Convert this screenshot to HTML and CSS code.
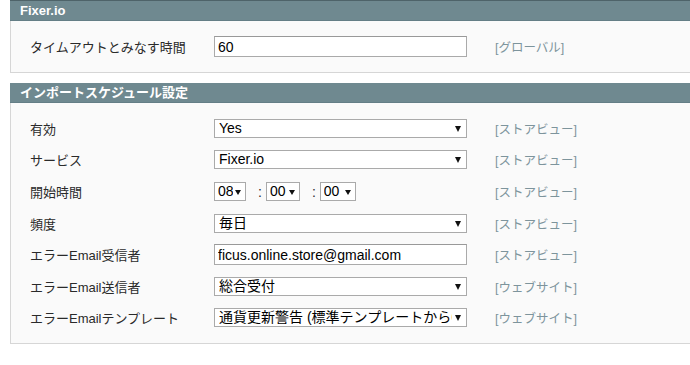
FILE: index.html
```html
<!DOCTYPE html>
<html lang="ja">
<head>
    <meta charset="UTF-8">
    <title>通貨設定</title>
    <link rel="stylesheet" href="styles.css">
</head>
<body>
    <div class="page">
        <div class="top-strip"></div>

        <div class="section">
            <div class="section-head">Fixer.io</div>
            <div class="section-body">
                <div class="row">
                    <label class="label" for="timeout">タイムアウトとみなす時間</label>
                    <div class="value"><input class="text" id="timeout" type="text" value="60"></div>
                    <div class="scope">[グローバル]</div>
                </div>
            </div>
        </div>

        <div class="section">
            <div class="section-head">インポートスケジュール設定</div>
            <div class="section-body">
                <div class="row">
                    <label class="label">有効</label>
                    <div class="value"><span class="select"><select><option>Yes</option></select></span></div>
                    <div class="scope">[ストアビュー]</div>
                </div>
                <div class="row">
                    <label class="label">サービス</label>
                    <div class="value"><span class="select"><select><option>Fixer.io</option></select></span></div>
                    <div class="scope">[ストアビュー]</div>
                </div>
                <div class="row">
                    <label class="label">開始時間</label>
                    <div class="value time">
                        <span class="select small hh"><select><option>08</option></select></span>
                        <span class="colon">:</span>
                        <span class="select small mm"><select><option>00</option></select></span>
                        <span class="colon">:</span>
                        <span class="select small ss"><select><option>00</option></select></span>
                    </div>
                    <div class="scope">[ストアビュー]</div>
                </div>
                <div class="row">
                    <label class="label">頻度</label>
                    <div class="value"><span class="select"><select><option>毎日</option></select></span></div>
                    <div class="scope">[ストアビュー]</div>
                </div>
                <div class="row">
                    <label class="label">エラーEmail受信者</label>
                    <div class="value"><input class="text" type="text" value="ficus.online.store@gmail.com"></div>
                    <div class="scope">[ストアビュー]</div>
                </div>
                <div class="row">
                    <label class="label">エラーEmail送信者</label>
                    <div class="value"><span class="select"><select><option>総合受付</option></select></span></div>
                    <div class="scope">[ウェブサイト]</div>
                </div>
                <div class="row">
                    <label class="label">エラーEmailテンプレート</label>
                    <div class="value"><span class="select"><select><option>通貨更新警告 (標準テンプレートから63)</option></select></span></div>
                    <div class="scope">[ウェブサイト]</div>
                </div>
            </div>
        </div>
    </div>
</body>
</html>
```

FILE: styles.css
```css
body {
    margin: 0;
    padding: 0;
    background-color: #fff;
    color: #2f2f2f;
    font-family: "Liberation Sans", "Noto Sans CJK JP", sans-serif;
    font-size: 13px;
}

.page {
    padding-left: 10px;
    width: 700px;
}

.top-strip {
    height: 1px;
    background: #4e6369;
}

.section {
    margin-bottom: 10px;
}

.section-head {
    height: 19px;
    line-height: 19px;
    padding-left: 10px;
    background: #6f8990;
    border-bottom: 1px solid #647e86;
    color: #fff;
    font-weight: bold;
    font-size: 13px;
}

.section-body {
    background: #fafafa;
    border: 1px solid #d6d6d6;
    border-top: none;
    padding: 10px 0 9px 19px;
}

.row {
    display: grid;
    grid-template-columns: 184px 253px auto;
    align-items: center;
    height: 31.6px;
}

.label {
    font-size: 13px;
    color: #2a2a2a;
}

.value {
    display: flex;
    align-items: center;
}

.scope {
    margin-left: 28px;
    color: #7d949c;
    font-size: 12.5px;
}

.text {
    box-sizing: border-box;
    width: 253px;
    height: 21px;
    margin: 0;
    padding: 0 3px;
    border: 1px solid #aaa;
    border-top-color: #999;
    background: #fff;
    font-family: "Liberation Sans", "Noto Sans CJK JP", sans-serif;
    font-size: 14px;
    color: #000;
}

.select {
    position: relative;
    display: inline-block;
    width: 253px;
}

.select select {
    -webkit-appearance: none;
    appearance: none;
    box-sizing: border-box;
    width: 100%;
    height: 19px;
    margin: 0;
    padding: 0 14px 0 4px;
    border: 1px solid #aaa;
    border-radius: 0;
    background: #fff;
    font-family: "Liberation Sans", "Noto Sans CJK JP", sans-serif;
    font-size: 14px;
    line-height: 17px;
    color: #000;
}

.select::after {
    content: "";
    position: absolute;
    right: 6px;
    top: 7px;
    border-left: 3.5px solid transparent;
    border-right: 3.5px solid transparent;
    border-top: 6px solid #111;
    pointer-events: none;
}

.select.small select {
    padding: 0 12px 0 3px;
}

.select.small::after {
    right: 5px;
    top: 8px;
    border-left-width: 3px;
    border-right-width: 3px;
    border-top-width: 5px;
}

.hh { width: 32px; }
.mm { width: 34px; }
.ss { width: 36px; }

.colon {
    margin: 0 4px 0 12px;
    font-size: 14px;
}
```
